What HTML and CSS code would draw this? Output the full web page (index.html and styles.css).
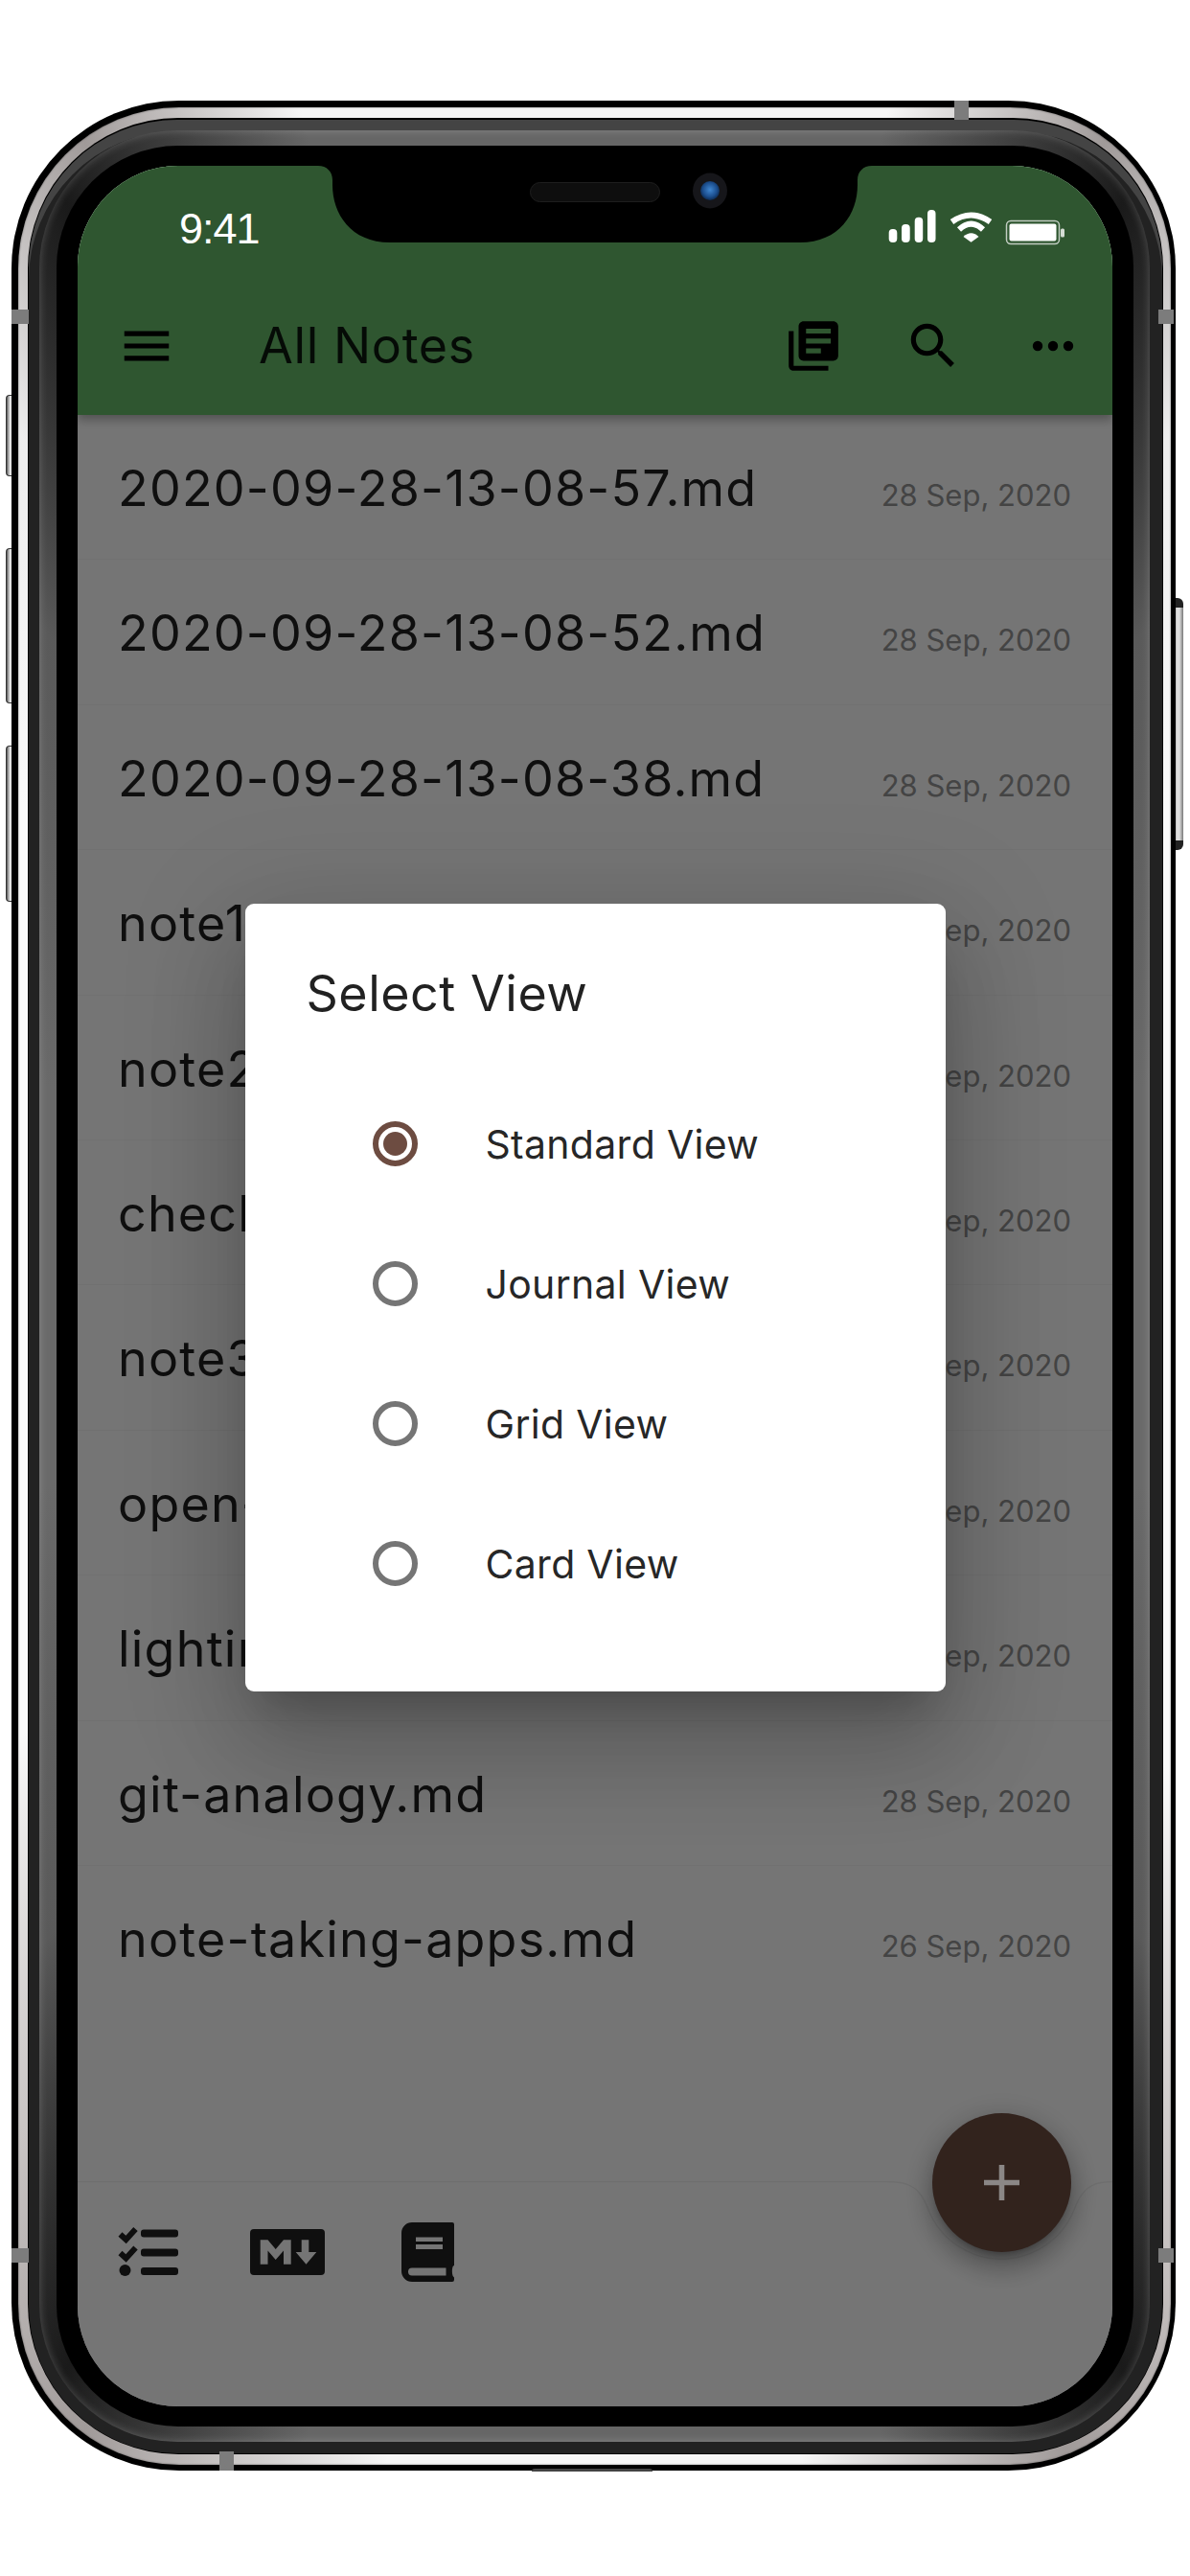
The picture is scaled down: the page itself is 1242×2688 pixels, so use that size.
FILE: index.html
```html
<!DOCTYPE html>
<html lang="en">
<head>
<meta charset="utf-8">
<title>All Notes</title>
<link rel="stylesheet" href="styles.css">
</head>
<body>
<div class="device">
  <span class="side-btn btn-mute"></span>
  <span class="side-btn btn-up"></span>
  <span class="side-btn btn-down"></span>
  <span class="side-btn btn-power"></span>
  <div class="case">
    <div class="rim">
      <div class="rim-gap">
        <div class="band-dark">
          <div class="band-grad">
            <div class="bezel">
              <main class="screen">
                <header class="appbar">
                  <div class="toolbar">
                    <svg class="icon62" viewBox="0 0 24 24"><path d="M3 18h18v-2H3v2zm0-5h18v-2H3v2zm0-7v2h18V6H3z"/></svg>
                    <h1 class="appbar-title">All Notes</h1>
                    <div class="actions">
                      <svg class="icon62" viewBox="0 0 24 24"><path d="M4 6H2v14c0 1.1.9 2 2 2h14v-2H4V6zm16-4H8c-1.1 0-2 .9-2 2v12c0 1.1.9 2 2 2h12c1.1 0 2-.9 2-2V4c0-1.1-.9-2-2-2zm-1 9H9V9h10v2zm-4 4H9v-2h6v2zm4-8H9V5h10v2z"/></svg>
                      <svg class="icon62" viewBox="0 0 24 24"><path d="M15.5 14h-.79l-.28-.27C15.41 12.59 16 11.11 16 9.5 16 5.91 13.09 3 9.5 3S3 5.91 3 9.5 5.91 16 9.5 16c1.61 0 3.09-.59 4.23-1.57l.27.28v.79l5 4.99L20.49 19l-4.99-5zm-6 0C7.01 14 5 11.99 5 9.5S7.01 5 9.5 5 14 7.01 14 9.5 11.99 14 9.5 14z"/></svg>
                      <svg class="icon62" viewBox="0 0 62 62"><circle cx="15" cy="31" r="5.2"/><circle cx="31" cy="31" r="5.2"/><circle cx="47" cy="31" r="5.2"/></svg>
                    </div>
                  </div>
                </header>

                <ul class="notes">
                  <li class="note"><span class="note-title">2020-09-28-13-08-57.md</span><span class="note-date">28 Sep, 2020</span></li>
                  <li class="note"><span class="note-title">2020-09-28-13-08-52.md</span><span class="note-date">28 Sep, 2020</span></li>
                  <li class="note"><span class="note-title">2020-09-28-13-08-38.md</span><span class="note-date">28 Sep, 2020</span></li>
                  <li class="note"><span class="note-title">note1.md</span><span class="note-date">28 Sep, 2020</span></li>
                  <li class="note"><span class="note-title">note2.md</span><span class="note-date">28 Sep, 2020</span></li>
                  <li class="note"><span class="note-title">checklist.md</span><span class="note-date">28 Sep, 2020</span></li>
                  <li class="note"><span class="note-title">note3.md</span><span class="note-date">28 Sep, 2020</span></li>
                  <li class="note"><span class="note-title">open-source.md</span><span class="note-date">28 Sep, 2020</span></li>
                  <li class="note"><span class="note-title">lighting.md</span><span class="note-date">28 Sep, 2020</span></li>
                  <li class="note"><span class="note-title">git-analogy.md</span><span class="note-date">28 Sep, 2020</span></li>
                  <li class="note"><span class="note-title">note-taking-apps.md</span><span class="note-date">26 Sep, 2020</span></li>
                </ul>

                <footer class="bottombar">
                  <svg class="bar-edge" viewBox="0 0 1080 90"><path d="M0 .5H845C870 .5 880 8 888 30A82 82 0 0 0 1040 30C1048 8 1058 .5 1080 .5"/></svg>
                  <svg class="tool tool-list" viewBox="0 0 63 52"><path class="tick" d="M2.500 8.500l6 5.500 10-11M2.500 28l6 5.500 10-11"/><circle cx="7.500" cy="46" r="6"/><rect x="24" y="3.500" width="39" height="8" rx="3"/><rect x="24" y="23.500" width="39" height="8" rx="3"/><rect x="24" y="43" width="39" height="8" rx="3"/></svg>
                  <svg class="tool tool-md" viewBox="0 0 78 48"><path fill-rule="evenodd" d="M4 0H74a4 4 0 0 1 4 4V44a4 4 0 0 1-4 4H4a4 4 0 0 1-4-4V4a4 4 0 0 1 4-4ZM10.700 36.700V11.300H18.500L26.700 21 35 11.300H42.700V36.700H35V22.500L26.700 32 18.500 22.500V36.700ZM53.700 11.300V24H47.700L58.500 36.700 69.300 24H61.300V11.300Z"/></svg>
                  <svg class="tool tool-book" viewBox="0 0 55 62"><path fill-rule="evenodd" d="M11 0H53a2 2 0 0 1 2 2V43a2 2 0 0 1-1 2.500C52.500 48 52.500 54 54 56.500a2 2 0 0 1 1 2V60a2 2 0 0 1-2 2H11A11 11 0 0 1 0 51V11A11 11 0 0 1 11 0ZM15 15.500V20H43V15.500ZM15 23V28H43V23ZM11 47.500A4 4 0 0 0 11 55.500H46.500V47.500Z"/></svg>
                  <button class="fab" type="button"><svg class="fab-plus" viewBox="0 0 37 37"><path d="M15.700 0h5.600v15.700H37v5.600H21.300V37h-5.600V21.300H0v-5.600h15.700z"/></svg></button>
                </footer>

                <div class="scrim">
                  <section class="dialog">
                    <h2 class="dialog-title">Select View</h2>
                    <div class="option"><span class="radio radio-on"><span class="radio-dot"></span></span><span class="option-label">Standard View</span></div>
                    <div class="option"><span class="radio"></span><span class="option-label">Journal View</span></div>
                    <div class="option"><span class="radio"></span><span class="option-label">Grid View</span></div>
                    <div class="option"><span class="radio"></span><span class="option-label">Card View</span></div>
                  </section>
                </div>

                <div class="statusbar">
                  <span class="clock">9:41</span>
                  <svg class="status-icons" viewBox="0 0 185 37">
                    <rect x=".7" y="20" width="8.600" height="14" rx="4"/>
                    <rect x="14" y="15" width="8.700" height="19" rx="4"/>
                    <rect x="27.700" y="7.700" width="8.500" height="26.300" rx="4"/>
                    <rect x="41" y="0" width="8.500" height="34" rx="4"/>
                    <path class="wifi" d="M66.500 12.500Q86.500-1.500 106.500 12.500M74 20.500Q86.500 8.900 99 20.500"/>
                    <path d="M78.500 28Q86.500 20.500 94.500 28L86.500 33.700Z"/>
                    <rect class="batt-case" x="123.500" y="11.500" width="55" height="24" rx="4.500"/>
                    <rect x="126.500" y="14.500" width="49" height="18" rx="2"/>
                    <rect class="batt-nub" x="180" y="19.500" width="4" height="9" rx="1.500"/>
                  </svg>
                </div>

                <svg class="notch" viewBox="0 0 1080 90">
                  <defs>
                    <radialGradient id="lens" cx=".5" cy=".45" r=".6"><stop offset="0" stop-color="#3f86cf"/><stop offset=".6" stop-color="#1c4f8f"/><stop offset="1" stop-color="#08203f"/></radialGradient>
                  </defs>
                  <path d="M251 0C260 0 266 6 266 15V20C266 50 285 80 326 80H754C795 80 814 50 814 20V15C814 6 820 0 829 0Z"/>
                  <rect class="speaker" x="472.500" y="17.500" width="135" height="20" rx="10"/>
                  <ellipse class="cam-ring" cx="660" cy="26" rx="18" ry="18.500"/>
                  <circle cx="660" cy="26" r="10" fill="url(#lens)"/>
                </svg>
              </main>
            </div>
          </div>
        </div>
      </div>
    </div>
    <span class="cut cut-top"></span>
    <span class="cut cut-left1"></span>
    <span class="cut cut-right1"></span>
    <span class="cut cut-left2"></span>
    <span class="cut cut-right2"></span>
    <span class="cut cut-bottom"></span>
    <span class="grille"></span>
  </div>
</div>
</body>
</html>
```
FILE: styles.css
```css
* { box-sizing: border-box; }
html, body { margin: 0; padding: 0; background: #fff; }
body { width: 1242px; height: 2688px; overflow: hidden; font-family: Inter, "Liberation Sans", sans-serif; padding: 105px 15px 110px 12px; }

.device { position: relative; width: 1215px; height: 2473px; }

.side-btn { position: absolute; display: block; background: linear-gradient(90deg, #555 0, #ccc 30%, #f4f4f4 55%, #999 85%, #444 100%); border: 1px solid #333; border-right: 0; border-radius: 4px 0 0 4px; }
.btn-mute { left: -6px; top: 307px; width: 10px; height: 85px; }
.btn-up { left: -6px; top: 467px; width: 10px; height: 162px; }
.btn-down { left: -6px; top: 673px; width: 10px; height: 163px; }
.btn-power { right: -8px; top: 519px; width: 10px; height: 263px; background: linear-gradient(90deg, #888 0, #ddd 35%, #ddd 60%, #777 100%); border: 0; border-top: 10px solid #222; border-bottom: 10px solid #222; border-radius: 0 6px 6px 0; }

.case { position: relative; height: 100%; background: #000; border-radius: 175px; padding: 7px 5px 6px 7px; }
.rim { height: 100%; border-radius: 168px; padding: 11px 8px 11px 10px;
  background: conic-gradient(#f6f6f6 0deg, #f6f6f6 14deg, #a09a99 24deg, #eeeeee 34deg, #fafafa 50deg, #fafafa 130deg, #c4bfbe 150deg, #a09a99 158deg, #f6f6f6 170deg, #f6f6f6 190deg, #a09a99 204deg, #c9c5c4 214deg, #fafafa 232deg, #fafafa 310deg, #eeeeee 326deg, #a09a99 336deg, #f6f6f6 346deg);
  box-shadow: inset 0 0 2px rgba(0,0,0,.5); }
.rim-gap { height: 100%; background: #000; border-radius: 157px; padding: 2px 1px 1px 1px; }
.band-dark { height: 100%; background: #222; border-radius: 155px; padding: 11px 13px 12px 11px; box-shadow: inset 0 12px 0 #444; }
.band-grad { height: 100%; border-radius: 144px; padding: 16px 17px 16px 18px;
  background: conic-gradient(#666 0deg, #666 14deg, #1a1a1a 26deg, #5a5a5a 40deg, #6a6a6a 70deg, #6a6a6a 110deg, #5a5a5a 140deg, #1a1a1a 154deg, #666 166deg, #666 194deg, #1a1a1a 206deg, #5a5a5a 220deg, #6a6a6a 250deg, #6a6a6a 290deg, #5a5a5a 320deg, #1a1a1a 334deg, #666 346deg);
  box-shadow: inset 0 0 10px rgba(255,255,255,.22); }
.bezel { height: 100%; background: #000; border-radius: 127px; padding: 21px 22px 21px 22px; }

.screen { position: relative; height: 100%; border-radius: 105px; overflow: hidden; background: #fff; display: flex; flex-direction: column; }

.appbar { position: relative; flex: none; height: 260px; padding-top: 116px; background: #66bb6a; box-shadow: 0 5px 10px rgba(0,0,0,.3); }
.toolbar { display: flex; align-items: center; height: 144px; padding: 0 31px 0 41px; }
.icon62 { display: block; flex: none; width: 62px; height: 62px; fill: #000; }
.appbar-title { flex: 1; margin: 0 0 0 86px; font-size: 52px; line-height: 60px; font-weight: 400; letter-spacing: .6px; color: rgba(0,0,0,.87); }
.actions { display: flex; gap: 63px; }

.notes { flex: none; margin: 0; padding: 0; list-style: none; }
.note { display: flex; align-items: baseline; justify-content: space-between; height: 151.4px; padding: 47px 43px 0 42px; border-bottom: 1px solid #f6f6f6; }
.note:last-child { border-bottom: 0; }
.note-title { font-size: 52px; line-height: 60px; letter-spacing: 1.2px; color: rgba(0,0,0,.87); white-space: nowrap; }
.note-date { font-size: 31px; line-height: 36px; color: #949494; white-space: nowrap; }

.bottombar { position: absolute; left: 0; right: 0; bottom: 0; height: 234px; display: flex; align-items: flex-start; padding-left: 42px; }
.bar-edge { position: absolute; left: 0; top: -1px; width: 1080px; height: 90px; fill: none; stroke: rgba(0,0,0,.06); stroke-width: 1.500; }
.tool { display: block; flex: none; fill: rgba(0,0,0,.87); }
.tool .tick { fill: none; stroke: rgba(0,0,0,.87); stroke-width: 6; }
.tool-list { width: 63px; height: 52px; margin-top: 46px; }
.tool-md { width: 78px; height: 48px; margin: 49px 0 0 75px; }
.tool-book { width: 55px; height: 62px; margin: 42px 0 0 80px; }
.fab { position: absolute; left: 891.500px; top: -72.500px; width: 145px; height: 145px; border: 0; border-radius: 50%; padding: 0; background: #6d4c41; box-shadow: 0 16px 26px 2px rgba(0,0,0,.2), 0 6px 30px 5px rgba(0,0,0,.14), 0 8px 10px -5px rgba(0,0,0,.3); display: flex; align-items: center; justify-content: center; }
.fab-plus { position: relative; z-index: 2; width: 37px; height: 37px; fill: #8b8786; }

.scrim { position: absolute; inset: 0; z-index: 1; background: rgba(0,0,0,.54); display: flex; justify-content: center; align-items: flex-start; padding-top: 770px; }
.dialog { width: 731px; height: 822px; background: #fff; border-radius: 9px; box-shadow: 0 62px 99px 8px rgba(0,0,0,.14), 0 23px 120px 21px rgba(0,0,0,.12), 0 29px 39px -18px rgba(0,0,0,.2); }
.dialog-title { margin: 0; height: 177px; padding: 64px 0 0 64px; font-size: 52px; line-height: 60px; font-weight: 400; letter-spacing: .5px; color: rgba(0,0,0,.87); }
.option { display: flex; align-items: center; gap: 71px; height: 146px; padding-left: 133px; }
.option-label { font-size: 41px; line-height: 48px; letter-spacing: .3px; color: rgba(0,0,0,.87); position: relative; top: 1px; }
.radio { display: flex; align-items: center; justify-content: center; flex: none; width: 47px; height: 47px; border: 6px solid #757575; border-radius: 50%; }
.radio-on { border-color: #6d4c41; }
.radio-dot { width: 25px; height: 25px; border-radius: 50%; background: #6d4c41; }

.statusbar { position: absolute; left: 0; right: 0; top: 0; z-index: 2; display: flex; justify-content: space-between; align-items: flex-start; padding: 46px 49px 0 106px; color: #fff; }
.clock { font-family: "Liberation Sans", Arial, sans-serif; font-size: 45px; line-height: 40px; letter-spacing: -1px; }
.status-icons { display: block; width: 185px; height: 37px; fill: #fff; }
.status-icons .wifi { fill: none; stroke: #fff; stroke-width: 6; }
.status-icons .batt-case { fill: none; stroke: rgba(255,255,255,.7); stroke-width: 1.500; }
.status-icons .batt-nub { fill: rgba(255,255,255,.8); }

.notch { position: absolute; left: 0; top: 0; z-index: 3; width: 1080px; height: 90px; fill: #000; }
.notch .speaker { fill: #0e0e0e; stroke: #1e1e1e; stroke-width: 1; }
.notch .cam-ring { fill: #16161a; }

.cut { position: absolute; display: block; background: #7c7c7c; }
.cut-top { left: 984px; top: 0; width: 15px; height: 20px; }
.cut-left1 { left: 0; top: 218px; width: 18px; height: 15px; }
.cut-right1 { right: 2px; top: 218px; width: 16px; height: 15px; }
.cut-left2 { left: 0; top: 2241px; width: 18px; height: 15px; }
.cut-right2 { right: 2px; top: 2241px; width: 16px; height: 15px; }
.cut-bottom { left: 217px; bottom: 0; width: 15px; height: 20px; }
.grille { position: absolute; left: 543px; bottom: -1px; width: 126px; height: 3px; background: #444; border-radius: 3px 3px 0 0; }
```
